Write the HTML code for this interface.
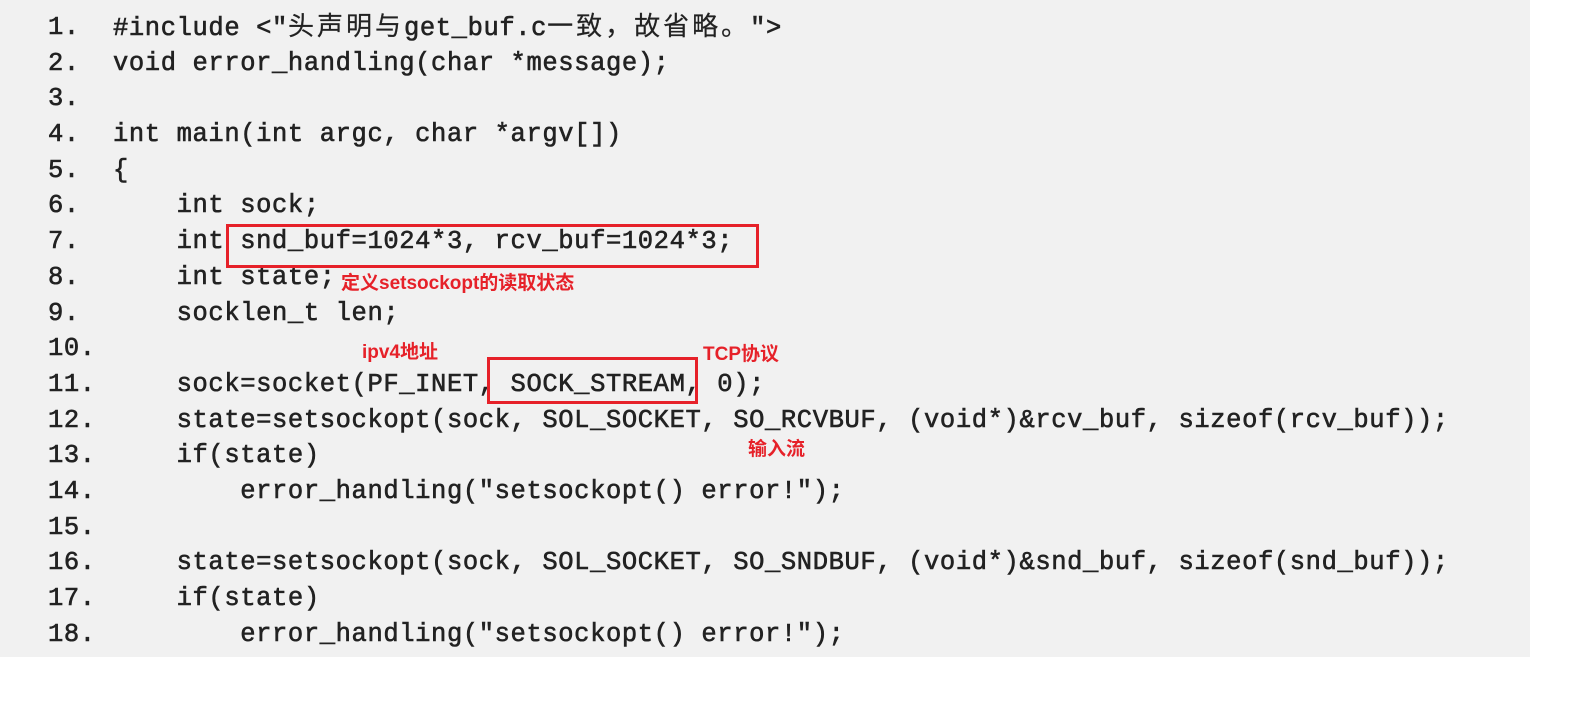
<!DOCTYPE html>
<html><head><meta charset="utf-8">
<style>
html,body{margin:0;padding:0;background:#fff;}
body{width:1590px;height:715px;position:relative;overflow:hidden;}
.paper{position:absolute;left:0;top:0;width:1530px;height:657px;background:#f1f1f1;}
.line{position:absolute;left:0;height:36px;line-height:36px;font-family:"Liberation Mono","Noto Sans CJK SC",monospace;font-size:25.5px;letter-spacing:0.6px;color:#222;white-space:pre;font-weight:normal;-webkit-text-stroke:0.6px #222;}
.num{position:absolute;left:48px;}
.code{position:absolute;left:113px;}
.cj{font-size:26px;letter-spacing:3px;-webkit-text-stroke:0.2px #222;}
.box{position:absolute;border:3px solid #e62129;box-sizing:border-box;}
.ann{position:absolute;color:#e62129;font-family:"Liberation Sans","Noto Sans CJK SC",sans-serif;font-weight:bold;font-size:19px;line-height:20px;white-space:nowrap;}
</style></head><body>
<div class="paper"></div>
<div class="line" style="top:10px"><span class="num">1.</span><span class="code">#include &lt;"<span class="cj">头声明与</span>get_buf.c<span class="cj">一致，故省略。</span>"&gt;</span></div>
<div class="line" style="top:46px"><span class="num">2.</span><span class="code">void error_handling(char *message);</span></div>
<div class="line" style="top:81px"><span class="num">3.</span></div>
<div class="line" style="top:117px"><span class="num">4.</span><span class="code">int main(int argc, char *argv[])</span></div>
<div class="line" style="top:153px"><span class="num">5.</span><span class="code">{</span></div>
<div class="line" style="top:188px"><span class="num">6.</span><span class="code">    int sock;</span></div>
<div class="line" style="top:224px"><span class="num">7.</span><span class="code">    int snd_buf=1024*3, rcv_buf=1024*3;</span></div>
<div class="line" style="top:260px"><span class="num">8.</span><span class="code">    int state;</span></div>
<div class="line" style="top:296px"><span class="num">9.</span><span class="code">    socklen_t len;</span></div>
<div class="line" style="top:331px"><span class="num">10.</span></div>
<div class="line" style="top:367px"><span class="num">11.</span><span class="code">    sock=socket(PF_INET, SOCK_STREAM, 0);</span></div>
<div class="line" style="top:403px"><span class="num">12.</span><span class="code">    state=setsockopt(sock, SOL_SOCKET, SO_RCVBUF, (void*)&amp;rcv_buf, sizeof(rcv_buf));</span></div>
<div class="line" style="top:438px"><span class="num">13.</span><span class="code">    if(state)</span></div>
<div class="line" style="top:474px"><span class="num">14.</span><span class="code">        error_handling("setsockopt() error!");</span></div>
<div class="line" style="top:510px"><span class="num">15.</span></div>
<div class="line" style="top:545px"><span class="num">16.</span><span class="code">    state=setsockopt(sock, SOL_SOCKET, SO_SNDBUF, (void*)&amp;snd_buf, sizeof(snd_buf));</span></div>
<div class="line" style="top:581px"><span class="num">17.</span><span class="code">    if(state)</span></div>
<div class="line" style="top:617px"><span class="num">18.</span><span class="code">        error_handling("setsockopt() error!");</span></div>
<div class="box" style="left:226px;top:224px;width:533px;height:44px;"></div>
<div class="box" style="left:487px;top:357px;width:211px;height:47px;"></div>
<div class="ann" style="left:341px;top:274px;">定义setsockopt的读取状态</div>
<div class="ann" style="left:362px;top:343px;">ipv4地址</div>
<div class="ann" style="left:703px;top:345px;">TCP协议</div>
<div class="ann" style="left:748px;top:440px;">输入流</div>
</body></html>
